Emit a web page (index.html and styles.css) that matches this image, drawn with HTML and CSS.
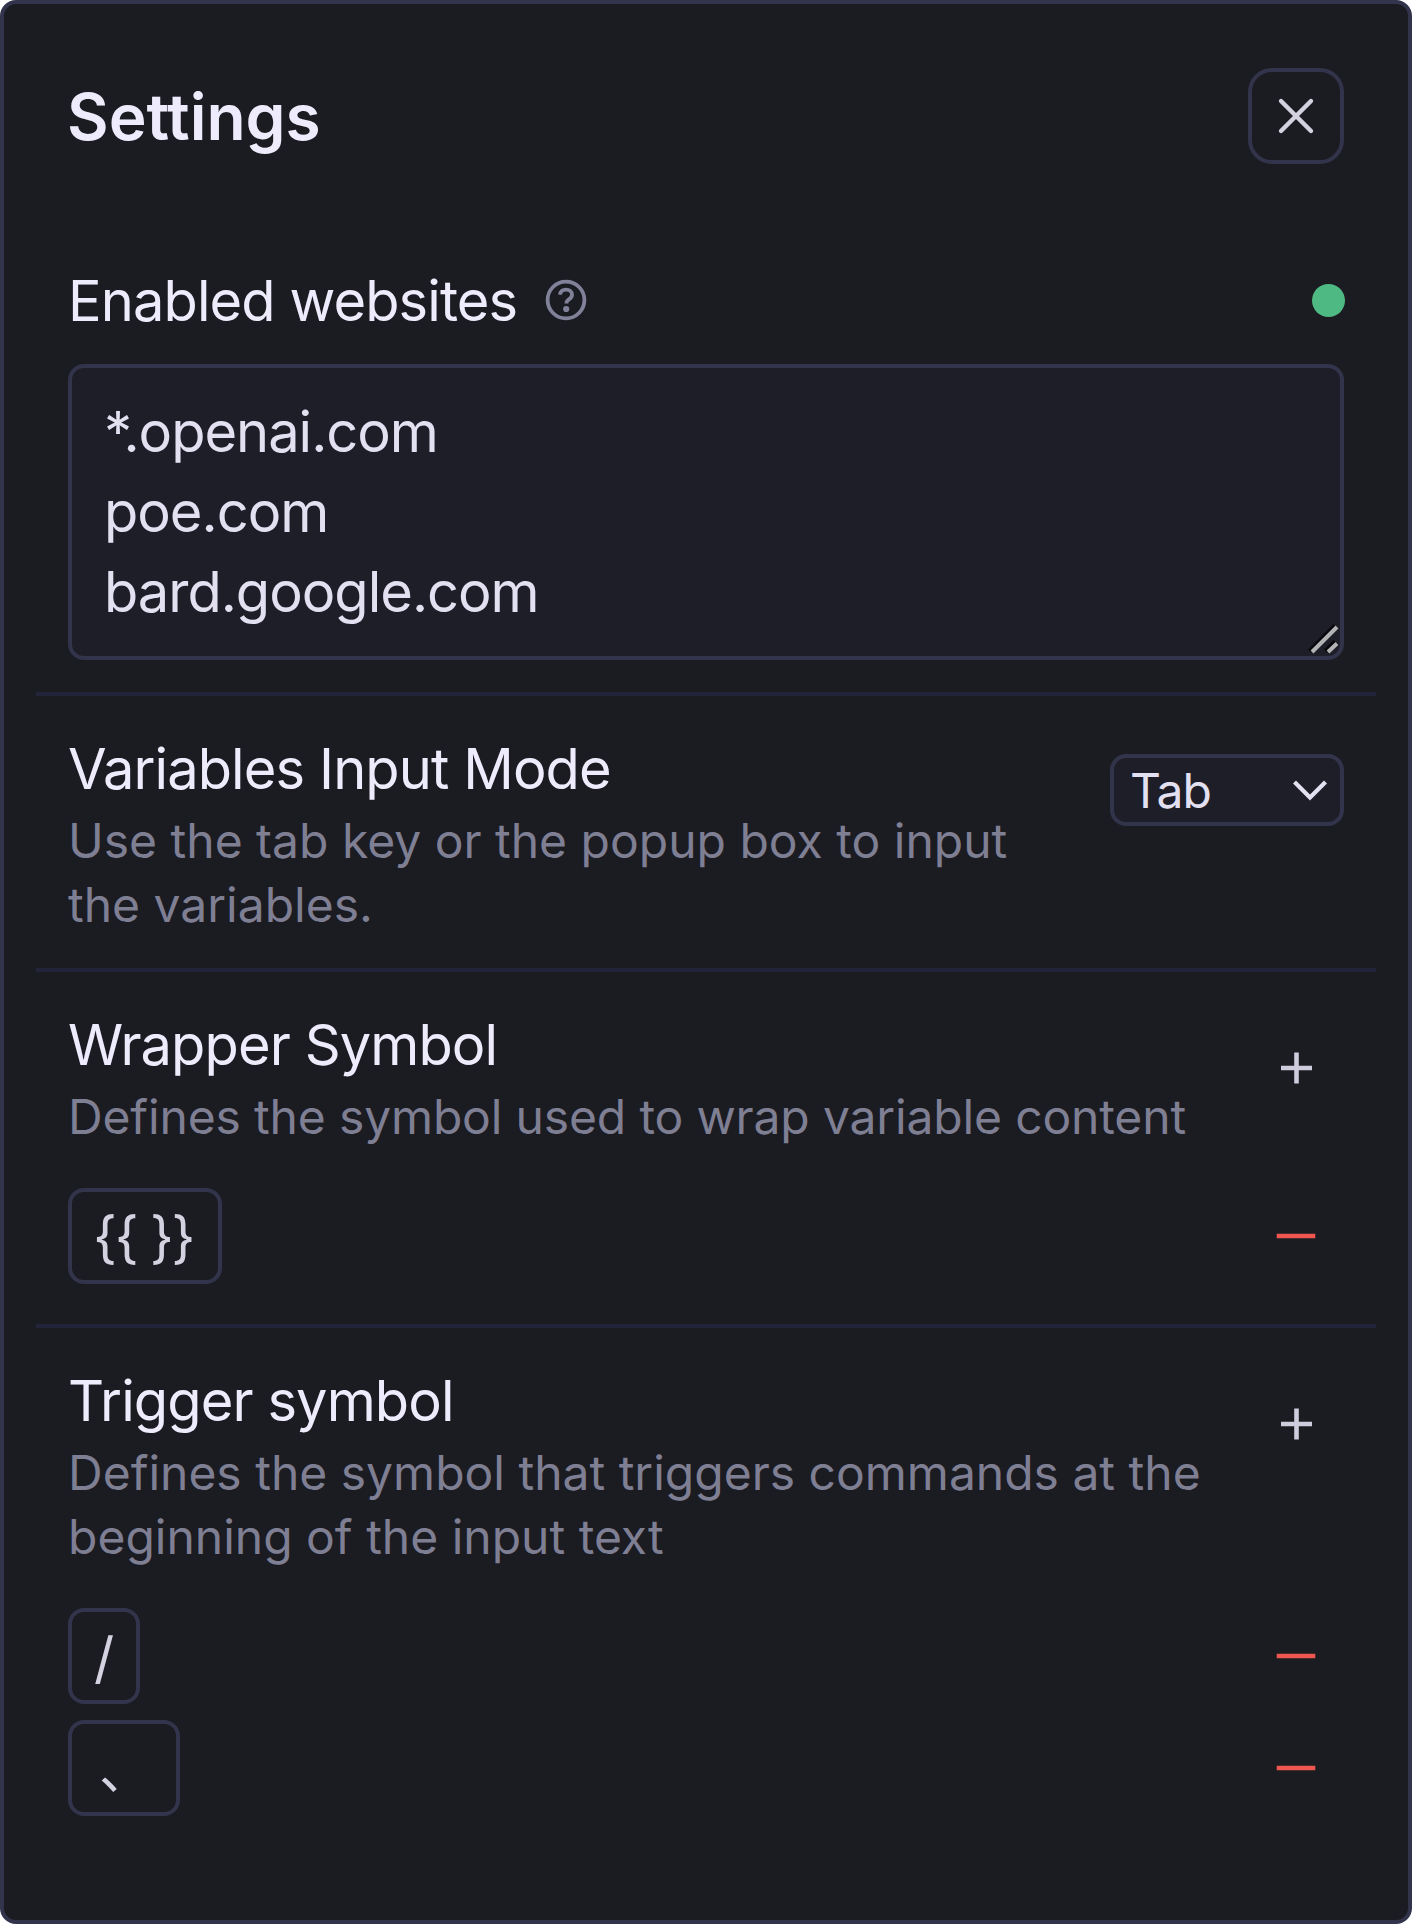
FILE: index.html
```html
<!DOCTYPE html>
<html lang="en">
<head>
<meta charset="utf-8">
<title>Settings</title>
<link rel="stylesheet" href="styles.css">
</head>
<body>
<main class="panel">
  <header class="header">
    <h1 class="title">Settings</h1>
    <button class="close" aria-label="Close">
      <svg width="40" height="40" viewBox="0 0 40 40"><path d="M5 5L35 35M35 5L5 35"/></svg>
    </button>
  </header>

  <section class="websites">
    <div class="row row-center">
      <div class="label-group">
        <label class="label" for="sites">Enabled websites</label>
        <svg class="help" width="42" height="42" viewBox="0 0 42 42">
          <circle cx="21" cy="21" r="18.4"/>
          <path d="M15.2 15.8C15.2 12.2 17.8 10.6 21 10.6C24.4 10.6 27 12.7 27 15.8C27 18.2 25.5 19.4 23.9 20.4C22.2 21.5 21.4 22.2 21.4 24.6"/>
          <circle class="help-dot" cx="21.2" cy="30" r="3.1"/>
        </svg>
      </div>
      <span class="status"></span>
    </div>
    <div class="field">
      <textarea class="sites" id="sites" rows="3" spellcheck="false">*.openai.com
poe.com
bard.google.com</textarea>
      <svg class="grip" width="32" height="32" viewBox="0 0 32 32">
        <path class="grip-shadow" d="M2.500 28L28 2.500M18.500 28L28 18.500"/>
        <path class="grip-line" d="M5 29L30 4M21 29L30 20.500"/>
      </svg>
    </div>
  </section>

  <section class="section">
    <div class="row">
      <div class="text text-narrow">
        <h2 class="label">Variables Input Mode</h2>
        <p class="desc">Use the tab key or the popup box to input the variables.</p>
      </div>
      <button class="select">
        <span class="select-value">Tab</span>
        <svg width="40" height="24" viewBox="0 0 40 24"><path d="M4.500 4L20 19.500L35.500 4"/></svg>
      </button>
    </div>
  </section>

  <section class="section section-list">
    <div class="row">
      <div class="text">
        <h2 class="label">Wrapper Symbol</h2>
        <p class="desc desc-tight">Defines the symbol used to wrap variable content</p>
      </div>
      <button class="icon-button add" aria-label="Add wrapper symbol">
        <svg width="40" height="40" viewBox="0 0 40 40"><path d="M5 20H36M20.500 4.500V35.500"/></svg>
      </button>
    </div>
    <ul class="list">
      <li class="item">
        <span class="tag tag-wrapper">{{ }}</span>
        <button class="icon-button remove" aria-label="Remove"><svg width="40" height="40" viewBox="0 0 40 40"><path d="M.7 20H39.300"/></svg></button>
      </li>
    </ul>
  </section>

  <section class="section section-list">
    <div class="row">
      <div class="text">
        <h2 class="label">Trigger symbol</h2>
        <p class="desc">Defines the symbol that triggers commands at the beginning of the input text</p>
      </div>
      <button class="icon-button add" aria-label="Add trigger symbol">
        <svg width="40" height="40" viewBox="0 0 40 40"><path d="M5 20H36M20.500 4.500V35.500"/></svg>
      </button>
    </div>
    <ul class="list">
      <li class="item">
        <span class="tag tag-slash">/</span>
        <button class="icon-button remove" aria-label="Remove"><svg width="40" height="40" viewBox="0 0 40 40"><path d="M.7 20H39.300"/></svg></button>
      </li>
      <li class="item">
        <span class="tag tag-comma">、</span>
        <button class="icon-button remove" aria-label="Remove"><svg width="40" height="40" viewBox="0 0 40 40"><path d="M.7 20H39.300"/></svg></button>
      </li>
    </ul>
  </section>
</main>
</body>
</html>
```
FILE: styles.css
```css
* {
  box-sizing: border-box;
  margin: 0;
  padding: 0;
}

body {
  background: #fff;
  font-family: Inter, "Noto Sans CJK SC", sans-serif;
  font-size: 56px;
  line-height: 80px;
  color: #eeecfc;
}

button {
  font: inherit;
  color: inherit;
  background: none;
  border: 0;
}

svg {
  display: block;
  fill: none;
}

.panel {
  width: 1412px;
  height: 1924px;
  padding: 64px;
  border: 4px solid #32344b;
  border-radius: 16px;
  background: #1b1b22;
}

.header {
  display: flex;
  align-items: center;
  justify-content: space-between;
  margin-bottom: 96px;
}

.title {
  padding-top: 2px;
  margin-left: -1px;
  font-size: 64px;
  font-weight: 600;
  line-height: 80px;
}

.close {
  display: grid;
  place-items: center;
  width: 96px;
  height: 96px;
  border: 4px solid #32344b;
  border-radius: 24px;
  stroke: #d4d1e1;
  stroke-width: 4.4;
  stroke-linecap: round;
}

.row {
  display: flex;
  align-items: flex-start;
  justify-content: space-between;
}

.row-center {
  align-items: center;
}

.label-group {
  display: flex;
  align-items: center;
  gap: 28px;
}

.label {
  padding-top: 1px;
  margin-bottom: -1px;
  font-size: 56px;
  font-weight: 400;
  line-height: 80px;
  letter-spacing: -0.9px;
}

.help {
  stroke: #81819a;
  stroke-width: 3.8;
}

.help-dot {
  fill: #81819a;
  stroke: none;
}

.status {
  width: 33px;
  height: 33px;
  margin-right: -1px;
  border-radius: 50%;
  background: #4fb983;
}

.field {
  position: relative;
  margin: 24px 0 32px;
}

.sites {
  display: block;
  width: 100%;
  height: 296px;
  padding: 24px 32px;
  border: 4px solid #32344b;
  border-radius: 16px;
  outline: none;
  resize: none;
  overflow: hidden;
  background: #1e1e28;
  color: #e2e0f1;
  font: inherit;
  letter-spacing: -1px;
}

.grip {
  position: absolute;
  right: 5px;
  bottom: 5px;
}

.grip-shadow {
  stroke: #08080c;
  stroke-width: 4;
}

.grip-line {
  stroke: #b3b3b5;
  stroke-width: 4;
}

.section {
  margin: 0 -32px;
  padding: 32px;
  border-top: 4px solid #222439;
}

.section-list {
  padding-bottom: 40px;
}

.text {
  width: 1160px;
}

.text-narrow {
  width: 980px;
}

.desc {
  padding-top: 1px;
  margin-bottom: -1px;
  font-size: 48px;
  line-height: 64px;
  color: #7f7f94;
}

.desc-tight {
  letter-spacing: -0.15px;
}

.select {
  display: flex;
  align-items: center;
  justify-content: space-between;
  width: 234px;
  height: 72px;
  margin-top: 26px;
  padding: 0 10px 0 16px;
  border: 4px solid #32344b;
  border-radius: 16px;
  background: #1e1e28;
  color: #e2e0f1;
  font-size: 48px;
  line-height: 64px;
  letter-spacing: -0.9px;
  stroke: #e2e0f1;
  stroke-width: 4.2;
}

.select-value {
  padding-top: 2px;
  stroke: none;
}

.icon-button {
  display: grid;
  place-items: center;
  width: 96px;
  height: 96px;
  stroke-width: 4.6;
}

.add {
  margin-top: 16px;
  stroke: #cfcddd;
}

.remove {
  stroke: #ef5650;
}

.list {
  display: grid;
  gap: 16px;
  margin-top: 40px;
  list-style: none;
}

.item {
  display: flex;
  align-items: center;
  justify-content: space-between;
}

.tag {
  height: 96px;
  padding: 5px 0 0 22px;
  border: 4px solid #32344b;
  border-radius: 16px;
  color: #d4d1e1;
  white-space: nowrap;
}

.tag-wrapper {
  width: 154px;
  padding-left: 21px;
  letter-spacing: -2.2px;
}

.tag-slash {
  width: 72px;
  padding-top: 6px;
}

.tag-comma {
  width: 112px;
  padding: 9px 0 0 27px;
  font-size: 52px;
  line-height: 76px;
}
```
